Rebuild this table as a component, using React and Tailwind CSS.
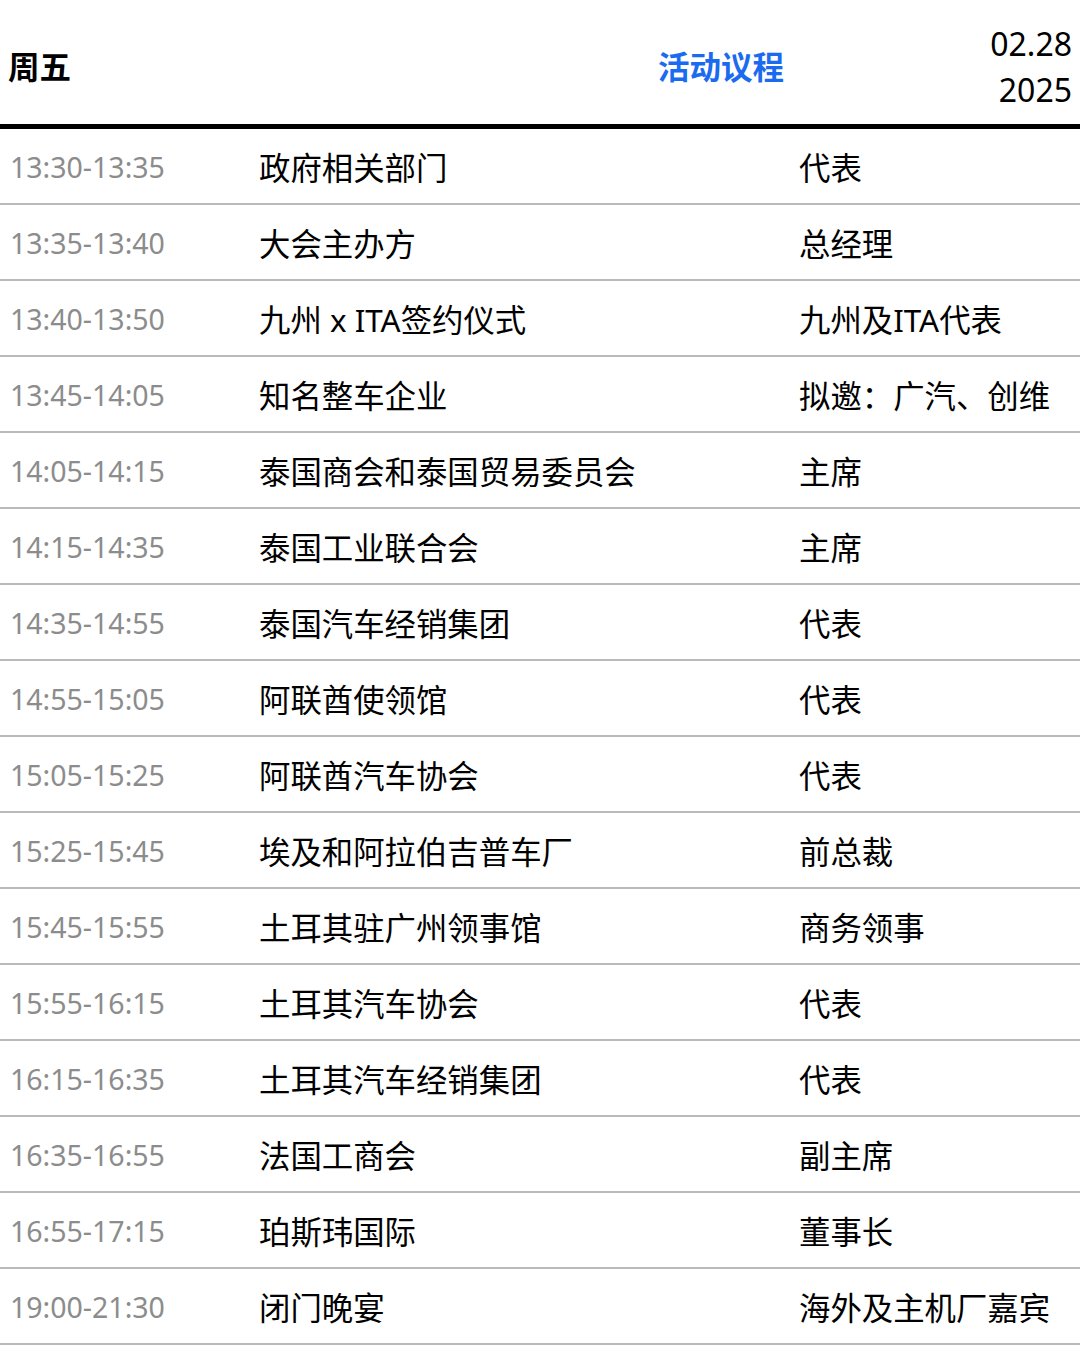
const ROWS = [
  ['13:30-13:35', '政府相关部门', '代表'],
  ['13:35-13:40', '大会主办方', '总经理'],
  ['13:40-13:50', '九州 x ITA签约仪式', '九州及ITA代表'],
  ['13:45-14:05', '知名整车企业', '拟邀：广汽、创维'],
  ['14:05-14:15', '泰国商会和泰国贸易委员会', '主席'],
  ['14:15-14:35', '泰国工业联合会', '主席'],
  ['14:35-14:55', '泰国汽车经销集团', '代表'],
  ['14:55-15:05', '阿联酋使领馆', '代表'],
  ['15:05-15:25', '阿联酋汽车协会', '代表'],
  ['15:25-15:45', '埃及和阿拉伯吉普车厂', '前总裁'],
  ['15:45-15:55', '土耳其驻广州领事馆', '商务领事'],
  ['15:55-16:15', '土耳其汽车协会', '代表'],
  ['16:15-16:35', '土耳其汽车经销集团', '代表'],
  ['16:35-16:55', '法国工商会', '副主席'],
  ['16:55-17:15', '珀斯玮国际', '董事长'],
  ['19:00-21:30', '闭门晚宴', '海外及主机厂嘉宾'],
]

export default function App() {
  return (
    <div
      className="w-[1080px] bg-white text-black"
      style={{ fontFamily: '"Noto Sans", "Noto Sans CJK SC", sans-serif' }}
    >
      {/* Header */}
      <div className="h-[124px] flex items-center pl-[8px] pr-[8px] pt-[9px]">
        <div className="w-[400px] text-[31.5px] font-bold leading-none">周五</div>
        <div className="flex-1 pl-[250px] text-[31.5px] font-bold text-[#1a6bf0] leading-none">活动议程</div>
        <div className="text-right text-[32px] leading-[46px]">
          <div>02.28</div>
          <div>2025</div>
        </div>
      </div>
      <div className="h-[5px] bg-black" />

      {/* Agenda rows */}
      {ROWS.map(([time, item, role]) => (
        <div key={time} className="h-[76px] flex items-center border-b-2 border-[#bababa] pt-[3px]">
          <div className="w-[259px] pl-[10px] text-[28.5px] text-[#8c8c8c]">{time}</div>
          <div className="w-[540px] text-[31.4px]">{item}</div>
          <div className="flex-1 text-[31.4px] whitespace-nowrap">{role}</div>
        </div>
      ))}
    </div>
  )
}
